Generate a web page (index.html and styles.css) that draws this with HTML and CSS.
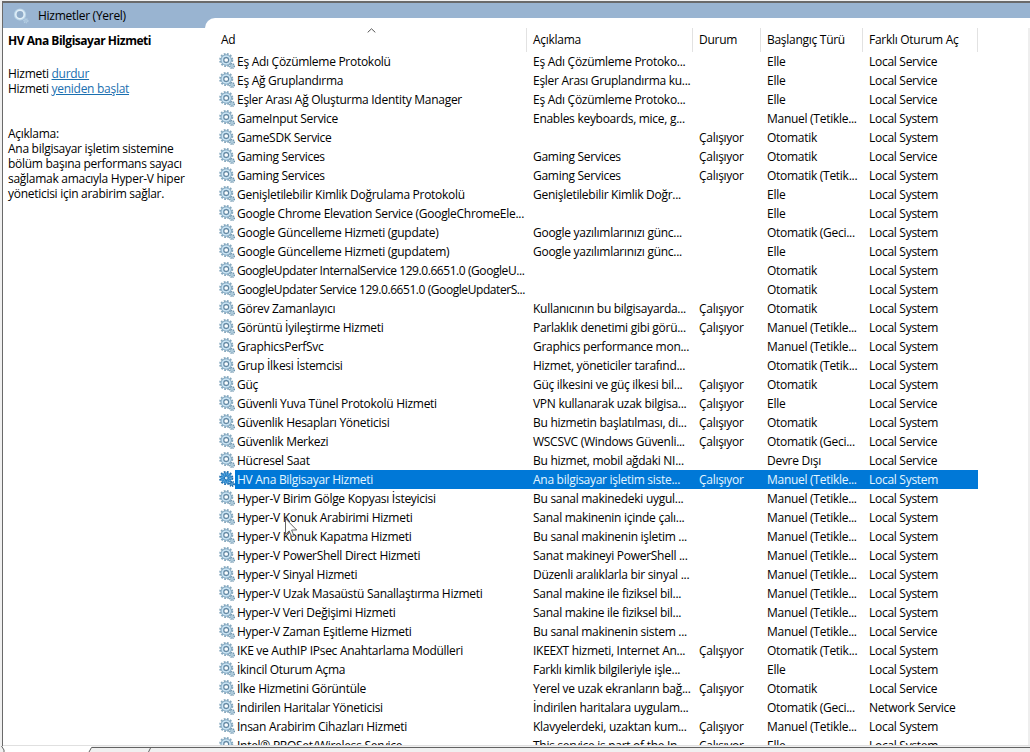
FILE: index.html
```html
<!DOCTYPE html>
<html lang="tr">
<head>
    <meta charset="UTF-8">
    <meta name="viewport" content="width=device-width, initial-scale=1.0">
    <title>Hizmetler</title>
    <link rel="stylesheet" href="styles.css">
</head>
<body>
    <svg class="defs" width="0" height="0">
        <symbol id="gears" viewBox="0 0 16 16">
            <circle cx="7.2" cy="7" r="6.1" fill="none" stroke="#86a9bf" stroke-width="1.9" stroke-dasharray="1.8 1.39"/>
            <circle cx="7.2" cy="7" r="4" fill="#e4f3fb" stroke="#a6cbe3" stroke-width="2.8"/>
            <circle cx="7.2" cy="7" r="5.3" fill="none" stroke="#7b9db5" stroke-width="0.7"/>
            <circle cx="7.2" cy="7" r="4" fill="none" stroke="#d3e9f6" stroke-width="1"/>
            <circle cx="7.2" cy="7" r="2.4" fill="#fbfeff" stroke="#5f839e" stroke-width="1.1"/>
            <circle cx="13" cy="13" r="2.3" fill="#c3dcea" stroke="#6e94ac" stroke-width="1.5" stroke-dasharray="1 0.8"/>
            <circle cx="13" cy="13" r="1.1" fill="#d9ebf4" stroke="#86a9bf" stroke-width="0.6"/>
        </symbol>
        <symbol id="gears-selected" viewBox="0 0 16 16">
            <circle cx="7.2" cy="7" r="6.1" fill="none" stroke="#216fae" stroke-width="2" stroke-dasharray="1.8 1.39"/>
            <circle cx="7.2" cy="7" r="3.8" fill="#e4f3fb" stroke="#2382cc" stroke-width="3.6"/>
            <circle cx="7.2" cy="7" r="4" fill="none" stroke="#5fa5d8" stroke-width="3" stroke-dasharray="1 1"/>
            <circle cx="7.2" cy="7" r="1.9" fill="#d7edfa" stroke="#1870b6" stroke-width="1"/>
            <circle cx="13" cy="13" r="2" fill="#5b9fce" stroke="#1c6caf" stroke-width="2" stroke-dasharray="1 0.8"/>
        </symbol>
    </svg>

    <div class="window">
        <div class="titlebar">
            <svg class="title-icon" viewBox="0 0 16 16">
                <circle cx="7" cy="6.5" r="4.6" fill="none" stroke="#b9d5e8" stroke-width="3"/>
                <circle cx="7" cy="6.5" r="4.2" fill="#8fabc8" stroke="#e2eff8" stroke-width="1.6"/>
                <circle cx="12.9" cy="12.8" r="2" fill="#a9c4dd" stroke="#b8d0e4" stroke-width="1.2" stroke-dasharray="1 0.8"/>
            </svg>
            <span>Hizmetler (Yerel)</span>
        </div>

        <div class="content">
            <div class="details">
                <h1>HV Ana Bilgisayar Hizmeti</h1>
                <p class="actions">
                    Hizmeti <a href="#">durdur</a><br>
                    Hizmeti <a href="#">yeniden başlat</a>
                </p>
                <p class="description">
                    Açıklama:<br>
                    Ana bilgisayar işletim sistemine<br>
                    bölüm başına performans sayacı<br>
                    sağlamak amacıyla Hyper-V hiper<br>
                    yöneticisi için arabirim sağlar.
                </p>
            </div>

            <div class="list">
                <div class="list-header">
                    <div>Ad
                        <svg class="sort" viewBox="0 0 9 5"><path d="M0.7 4.4 L4.5 0.8 L8.3 4.4" fill="none" stroke="#555" stroke-width="1"/></svg>
                    </div>
                    <div>Açıklama</div>
                    <div>Durum</div>
                    <div>Başlangıç Türü</div>
                    <div>Farklı Oturum Aç</div>
                </div>
                <div class="rows" id="rows"></div>
            </div>
        </div>

        <svg class="cursor" viewBox="0 0 13 20">
            <path d="M0.5 0.7 V16.3 L4.2 12.9 L6.7 18.8 L9 17.8 L6.6 12 H11.7 Z" fill="#fff" fill-opacity="0.75" stroke="#555" stroke-width="0.9"/>
        </svg>
    </div>

    <svg class="tabs" viewBox="0 0 1030 6">
        <path d="M0 0 H92 L89 6 H4 L2 0.5 V0 Z" fill="#fff"/>
        <path d="M1.5 0 L4 4 V6 M89 6 L91.5 1.5 H1030 M148.5 6 L150.5 2" fill="none" stroke="#636363" stroke-width="1"/>
    </svg>

    <script src="script.js"></script>
</body>
</html>
```
FILE: styles.css
```css
* {
    box-sizing: border-box;
}

body {
    margin: 0;
    padding-top: 1px;
    width: 1030px;
    height: 752px;
    overflow: hidden;
    background: #f0f0f0;
    color: #000;
    font-family: "Open Sans", "Noto Sans", sans-serif;
    font-size: 12px;
    line-height: 15px;
    letter-spacing: -0.28px;
}

.defs {
    position: absolute;
}

.window {
    position: relative;
    height: 745px;
    border-top: 2px solid #6a6a6a;
    border-left: 1px solid #6a6a6a;
    margin-left: 2px;
    background: #fff;
    overflow: hidden;
    box-shadow: inset 0 -1px #e0e0e0;
}

.titlebar {
    display: flex;
    align-items: center;
    height: 25px;
    padding-left: 10px;
    background: #99b4d1;
}

.title-icon {
    width: 16px;
    height: 16px;
    margin-right: 9px;
}

.content {
    display: flex;
    margin-top: -10px;
    height: 727px;
}

.details {
    width: 202px;
    padding: 15px 0 0 5px;
    white-space: nowrap;
}

.details h1 {
    margin: 0;
    font-size: 12px;
    line-height: 16px;
    letter-spacing: -0.47px;
}

.details p {
    margin: 0;
}

.details .actions {
    margin-top: 17px;
}

.details .description {
    margin-top: 30px;
}

a {
    color: #1a6fb0;
}

.list {
    flex: 1;
    padding: 10px 0 0 14px;
    background: linear-gradient(#eee, #eee) right 10px / 2px 100% no-repeat #fff;
    border-top-left-radius: 10px;
}

.list-header,
.row {
    display: grid;
    grid-template-columns: 308px 166px 68px 102px 115px;
    width: 759px;
}

.list-header {
    height: 24px;
    line-height: 24px;
}

.list-header div {
    position: relative;
    padding-left: 6px;
    border-right: 1px solid #e2e2e2;
    white-space: nowrap;
}

.list-header div:first-child {
    padding-left: 2px;
}

.sort {
    position: absolute;
    left: 148px;
    top: 0;
    width: 9px;
    height: 5px;
}

.rows {
    height: 693px;
    overflow: hidden;
}

.row {
    height: 19px;
    line-height: 19px;
    white-space: pre;
}

.row span {
    padding-left: 6px;
}

.row .name {
    display: flex;
    padding-left: 0;
}

.row .name b {
    flex: 1;
    min-width: 0;
    padding-left: 2px;
    font-weight: normal;
}

.row .name .tight {
    letter-spacing: -0.43px;
}

.gear {
    flex: none;
    width: 16px;
    height: 16px;
    margin-top: 1px;
}

.selected span:not(.name),
.selected b {
    background: #0078d7;
    color: #e4f6ff;
}

.cursor {
    position: absolute;
    left: 282px;
    top: 515px;
    width: 13px;
    height: 20px;
}

.tabs {
    display: block;
    width: 1030px;
    height: 6px;
}
```
FILE: script.js
```js
const LS = 'Local System';
const SV = 'Local Service';
const RUN = 'Çalışıyor';
const MT = 'Manuel (Tetikle...';
const OT = 'Otomatik (Tetik...';
const OG = 'Otomatik (Geci...';

const services = [
    ['Eş Adı Çözümleme Protokolü', 'Eş Adı Çözümleme Protoko...', '', 'Elle', SV],
    ['Eş Ağ Gruplandırma', 'Eşler Arası Gruplandırma ku...', '', 'Elle', SV],
    ['Eşler Arası Ağ Oluşturma Identity Manager', 'Eş Adı Çözümleme Protoko...', '', 'Elle', SV],
    ['GameInput Service', 'Enables keyboards, mice, g...', '', MT, LS],
    ['GameSDK Service', '', RUN, 'Otomatik', LS],
    ['Gaming Services', 'Gaming Services', RUN, 'Otomatik', SV],
    ['Gaming Services', 'Gaming Services', RUN, OT, LS],
    ['Genişletilebilir Kimlik Doğrulama Protokolü', 'Genişletilebilir Kimlik Doğr...', '', 'Elle', LS],
    ['Google Chrome Elevation Service (GoogleChromeEle...', '', '', 'Elle', LS],
    ['Google Güncelleme Hizmeti (gupdate)', 'Google yazılımlarınızı günc...', '', OG, LS],
    ['Google Güncelleme Hizmeti (gupdatem)', 'Google yazılımlarınızı günc...', '', 'Elle', LS],
    ['GoogleUpdater InternalService 129.0.6651.0 (GoogleU...', '', '', 'Otomatik', LS],
    ['GoogleUpdater Service 129.0.6651.0 (GoogleUpdaterS...', '', '', 'Otomatik', LS],
    ['Görev Zamanlayıcı', 'Kullanıcının bu bilgisayarda...', RUN, 'Otomatik', LS],
    ['Görüntü İyileştirme Hizmeti', 'Parlaklık denetimi gibi görü...', RUN, MT, LS],
    ['GraphicsPerfSvc', 'Graphics performance mon...', '', MT, LS],
    ['Grup İlkesi İstemcisi', 'Hizmet, yöneticiler tarafınd...', '', OT, LS],
    ['Güç', 'Güç ilkesini ve güç ilkesi bil...', RUN, 'Otomatik', LS],
    ['Güvenli Yuva Tünel Protokolü Hizmeti', 'VPN kullanarak uzak bilgisa...', RUN, 'Elle', SV],
    ['Güvenlik Hesapları Yöneticisi', 'Bu hizmetin başlatılması, di...', RUN, 'Otomatik', LS],
    ['Güvenlik Merkezi', 'WSCSVC (Windows Güvenli...', RUN, OG, SV],
    ['Hücresel Saat', 'Bu hizmet, mobil ağdaki NI...', '', 'Devre Dışı', SV],
    ['HV Ana Bilgisayar Hizmeti', 'Ana bilgisayar işletim siste...', RUN, MT, LS],
    ['Hyper-V Birim Gölge Kopyası İsteyicisi', 'Bu sanal makinedeki uygul...', '', MT, LS],
    ['Hyper-V Konuk Arabirimi Hizmeti', 'Sanal makinenin içinde çalı...', '', MT, LS],
    ['Hyper-V Konuk Kapatma Hizmeti', 'Bu sanal makinenin işletim ...', '', MT, LS],
    ['Hyper-V PowerShell Direct Hizmeti', 'Sanat makineyi PowerShell ...', '', MT, LS],
    ['Hyper-V Sinyal Hizmeti', 'Düzenli aralıklarla bir sinyal ...', '', MT, LS],
    ['Hyper-V Uzak Masaüstü Sanallaştırma Hizmeti', 'Sanal makine ile fiziksel bil...', '', MT, LS],
    ['Hyper-V Veri Değişimi Hizmeti', 'Sanal makine ile fiziksel bil...', '', MT, LS],
    ['Hyper-V Zaman Eşitleme Hizmeti', 'Bu sanal makinenin sistem ...', '', MT, SV],
    ['IKE ve AuthIP IPsec Anahtarlama Modülleri', 'IKEEXT hizmeti, Internet An...', RUN, OT, LS],
    ['İkincil Oturum Açma', 'Farklı kimlik bilgileriyle işle...', '', 'Elle', LS],
    ['İlke Hizmetini Görüntüle', 'Yerel ve uzak ekranların bağ...', RUN, 'Otomatik', SV],
    ['İndirilen Haritalar Yöneticisi', 'İndirilen haritalara uygulam...', '', OG, 'Network Service'],
    ['İnsan Arabirim Cihazları Hizmeti', 'Klavyelerdeki, uzaktan kum...', RUN, MT, LS],
    ['Intel® PROSet/Wireless Service', 'This service is part of the In...', RUN, 'Elle', LS]
];
const selected = 22;

document.getElementById('rows').innerHTML = services.map(([name, ...cells], i) => {
    const icon = i === selected ? 'gears-selected' : 'gears';
    // long names have to stay inside the first column
    const tight = name.length > 52 ? 'tight' : '';
    return `<div class="row ${i === selected ? 'selected' : ''}">` +
        `<span class="name"><svg class="gear"><use href="#${icon}"/></svg><b class="${tight}">${name}</b></span>` +
        cells.map(c => `<span>${c}</span>`).join('') +
        '</div>';
}).join('');
```
